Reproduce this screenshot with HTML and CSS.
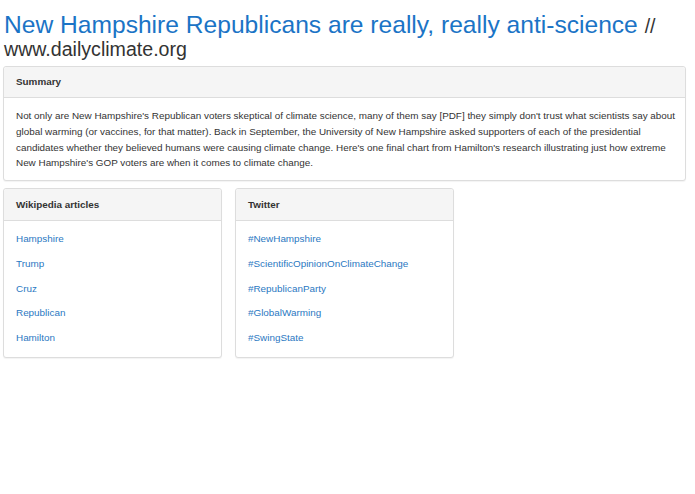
FILE: index.html
```html
<!DOCTYPE html>
<html lang="en">
<head>
  <meta charset="UTF-8" />
  <title>New Hampshire Republicans are really, really anti-science</title>
  <link rel="stylesheet" href="styles.css">
</head>
<body>
  <h1 class="title">
    <a href="#">New Hampshire Republicans are really, really anti-science</a>
    <small class="source">// www.dailyclimate.org</small>
  </h1>

  <div class="panel">
    <div class="panel-heading">Summary</div>
    <div class="panel-body">
      Not only are New Hampshire's Republican voters skeptical of climate science, many of them say [PDF] they simply don't trust what scientists say about global warming (or vaccines, for that matter). Back in September, the University of New Hampshire asked supporters of each of the presidential candidates whether they believed humans were causing climate change. Here's one final chart from Hamilton's research illustrating just how extreme New Hampshire's GOP voters are when it comes to climate change.
    </div>
  </div>

  <div class="row">
    <div class="panel">
      <div class="panel-heading">Wikipedia articles</div>
      <ul class="links">
        <li><a href="#">Hampshire</a></li>
        <li><a href="#">Trump</a></li>
        <li><a href="#">Cruz</a></li>
        <li><a href="#">Republican</a></li>
        <li><a href="#">Hamilton</a></li>
      </ul>
    </div>
    <div class="panel">
      <div class="panel-heading">Twitter</div>
      <ul class="links">
        <li><a href="#">#NewHampshire</a></li>
        <li><a href="#">#ScientificOpinionOnClimateChange</a></li>
        <li><a href="#">#RepublicanParty</a></li>
        <li><a href="#">#GlobalWarming</a></li>
        <li><a href="#">#SwingState</a></li>
      </ul>
    </div>
  </div>
</body>
</html>
```

FILE: styles.css
```css
body {
  font-family: "Liberation Sans", Arial, sans-serif;
  font-size: 9.9px;
  line-height: 15.7px;
  color: #333;
  background: #fff;
  margin: 0;
  padding: 13px 9px 0 3px;
}
a {
  color: #2a78c2;
  text-decoration: none;
}
.title {
  font-size: 24.6px;
  font-weight: normal;
  line-height: 23.4px;
  margin: 0 0 6px 1px;
}
.title a {
  color: #1b74c6;
}
.title .source {
  font-size: 19.6px;
  line-height: 18px;
  color: #333;
}
.panel {
  background: #fff;
  border: 1px solid #ddd;
  border-radius: 3px;
  box-shadow: 0 1px 1px rgba(0,0,0,0.05);
  margin-bottom: 7px;
}
.panel-heading {
  background: #f5f5f5;
  border-bottom: 1px solid #ddd;
  border-radius: 3px 3px 0 0;
  padding: 7.5px 12px;
  font-weight: bold;
  line-height: 15.5px;
}
.panel-body {
  padding: 10px 9px 9px 12px;
}
.row {
  display: grid;
  grid-template-columns: 219px 219px 219px;
  gap: 13px;
}
.links {
  list-style: none;
  margin: 0;
  padding: 6px 12px 6.5px;
}
.links li {
  padding: 4.6px 0;
  line-height: 15.5px;
}
```
